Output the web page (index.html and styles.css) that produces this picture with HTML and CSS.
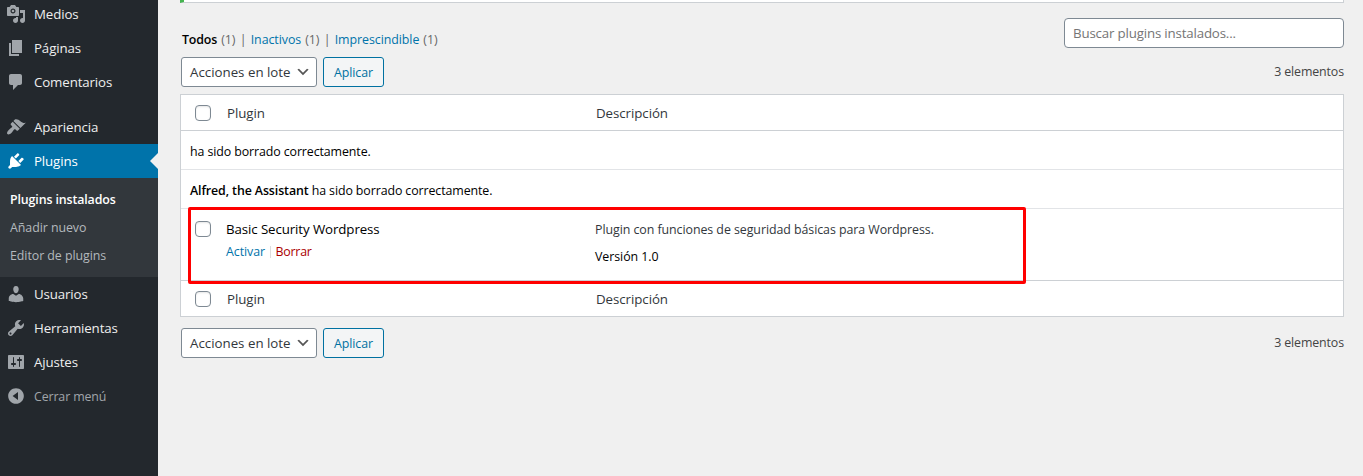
FILE: index.html
```
<!DOCTYPE html>
<html lang="es">
<head>
<meta charset="utf-8">
<title>Plugins</title>
<link rel="stylesheet" href="styles.css">
</head>
<body>
<div class="admin">
  <nav class="sidebar">
    <a class="item"><svg class="icon" viewBox="0 0 20 20"><path d="M13 11V4c0-.55-.45-1-1-1h-1.67L9 1H5L3.67 3H2c-.55 0-1 .45-1 1v7c0 .55.45 1 1 1h10c.55 0 1-.45 1-1zM7 4.5c1.38 0 2.5 1.12 2.5 2.5S8.38 9.5 7 9.5 4.5 8.38 4.5 7 5.62 4.5 7 4.5zM14 6h5v10.5c0 1.38-1.12 2.5-2.5 2.5S14 17.88 14 16.5s1.12-2.5 2.5-2.5c.17 0 .34.02.5.05V9h-3V6zm-4 8.05V13h2v3.5c0 1.38-1.12 2.5-2.5 2.5S7 17.88 7 16.5 8.12 14 9.5 14c.17 0 .34.02.5.05z"/><circle cx="7" cy="7" r="1.3"/></svg><span>Medios</span></a>
    <a class="item"><svg class="icon" viewBox="0 0 20 20"><path d="M6 15V2h10v13H6zm-1 1h8v2H3V5h2v11z"/></svg><span>Páginas</span></a>
    <a class="item"><svg class="icon" viewBox="0 0 20 20"><path d="M5 2h9c1.1 0 2 .9 2 2v7c0 1.1-.9 2-2 2h-2l-5 5v-5H5c-1.1 0-2-.9-2-2V4c0-1.1.9-2 2-2z"/></svg><span>Comentarios</span></a>
    <div class="separator"></div>
    <a class="item"><svg class="icon" viewBox="0 0 20 20"><path d="M14.48 11.06L7.41 3.99l1.5-1.5c.5-.56 2.3-.47 3.51.32 1.21.8 1.43 1.28 2.91 2.1 1.18.64 2.45 1.26 4.45.85zm-.71.71L6.7 4.7 4.93 6.47c-.39.39-.39 1.02 0 1.41l1.06 1.06c.39.39.39 1.03 0 1.42-.6.6-1.43 1.11-2.21 1.69-.35.26-.7.53-1.01.84C1.43 14.23.4 16.08 1.4 17.07c.99 1 2.84-.03 4.18-1.36.31-.31.58-.66.85-1.02.57-.78 1.08-1.61 1.69-2.21.39-.39 1.02-.39 1.41 0l1.06 1.06c.39.39 1.02.39 1.41 0z"/></svg><span>Apariencia</span></a>
    <a class="item current"><svg class="icon" viewBox="0 0 20 20"><path d="M13.11 4.36L9.87 7.6 8 5.73l3.24-3.24c.35-.34 1.05-.2 1.56.32.52.51.66 1.21.31 1.55zm-8 1.77l.91-1.12 9.01 9.01-1.19.84c-.71.71-2.63 1.16-3.82 1.16H6.14L4.9 17.26c-.59.59-1.54.59-2.12 0-.59-.58-.59-1.53 0-2.12l1.24-1.24v-3.88c0-1.13.4-3.19 1.09-3.89zm7.26 3.97l3.24-3.24c.34-.35 1.04-.21 1.55.31.52.51.66 1.21.31 1.55l-3.24 3.25z"/></svg><span>Plugins</span></a>
    <div class="submenu">
      <a class="sub active">Plugins instalados</a>
      <a class="sub">Añadir nuevo</a>
      <a class="sub">Editor de plugins</a>
    </div>
    <a class="item"><svg class="icon" viewBox="0 0 20 20"><path d="M10 9.25c-2.27 0-2.73-3.44-2.73-3.44C7 4.02 7.82 2 9.97 2c2.16 0 2.98 2.02 2.71 3.81 0 0-.41 3.44-2.68 3.44zm0 2.57L12.72 10c2.39 0 4.52 2.33 4.52 4.53v2.49s-3.65 1.13-7.24 1.13c-3.65 0-7.24-1.13-7.24-1.13v-2.49c0-2.25 1.94-4.48 4.47-4.48z"/></svg><span>Usuarios</span></a>
    <a class="item"><svg class="icon" viewBox="0 0 20 20"><path d="M16.68 9.77c-1.34 1.34-3.3 1.67-4.95.99l-5.41 6.52c-.99.99-2.59.99-3.58 0s-.99-2.59 0-3.57l6.52-5.42c-.68-1.65-.35-3.61.99-4.95 1.28-1.28 3.12-1.62 4.72-1.06l-2.89 2.89 2.82 2.82 2.86-2.87c.53 1.58.18 3.39-1.08 4.65zM3.81 16.21c.4.39 1.04.39 1.43 0 .4-.4.4-1.04 0-1.43-.39-.4-1.03-.4-1.43 0-.39.39-.39 1.03 0 1.43z"/></svg><span>Herramientas</span></a>
    <a class="item"><svg class="icon" viewBox="0 0 20 20"><path d="M18 16V4c0-.55-.45-1-1-1H3c-.55 0-1 .45-1 1v12c0 .55.45 1 1 1h14c.55 0 1-.45 1-1zM8 11h1c.55 0 1 .45 1 1s-.45 1-1 1H8v1.5c0 .28-.22.5-.5.5s-.5-.22-.5-.5V13H6c-.55 0-1-.45-1-1s.45-1 1-1h1V5.5c0-.28.22-.5.5-.5s.5.22.5.5V11zm5-2h-1c-.55 0-1-.45-1-1s.45-1 1-1h1V5.5c0-.28.22-.5.5-.5s.5.22.5.5V7h1c.55 0 1 .45 1 1s-.45 1-1 1h-1v5.5c0 .28-.22.5-.5.5s-.5-.22-.5-.5V9z"/></svg><span>Ajustes</span></a>
    <a class="item collapse"><svg class="icon" viewBox="0 0 20 20"><path fill-rule="evenodd" d="M10 2.16c4.33 0 7.84 3.51 7.84 7.84s-3.51 7.84-7.84 7.84S2.16 14.33 2.16 10 5.67 2.16 10 2.16zM12 13.88V6.12L6.6 10z"/></svg><span>Cerrar menú</span></a>
  </nav>

  <main class="content">
    <div class="notice"></div>
    <div class="top">
      <div class="views">
        <b class="todos">Todos</b><span class="count">(1)</span><i class="bar">|</i><a class="inactivos">Inactivos</a><span class="count">(1)</span><i class="bar">|</i><a class="impres">Imprescindible</a><span class="count">(1)</span>
      </div>
      <div class="search">Buscar plugins instalados...</div>
    </div>
    <div class="tablenav first">
      <div class="select"><span>Acciones en lote</span><svg class="chev" viewBox="0 0 20 20"><path d="M5 6l5 5 5-5 2 1-7 7-7-7 2-1z"/></svg></div>
      <div class="button">Aplicar</div>
      <div class="total">3 elementos</div>
    </div>
    <div class="table">
      <div class="row head"><span class="box"></span><span class="col-name">Plugin</span><span class="col-desc">Descripción</span></div>
      <div class="row message">ha sido borrado correctamente.</div>
      <div class="row message"><span><b>Alfred, the Assistant</b> ha sido borrado correctamente.</span></div>
      <div class="row plugin">
        <span class="box"></span>
        <div class="col-name">
          <div class="name">Basic Security Wordpress</div>
          <div class="actions"><a class="activate">Activar</a><i class="divider"></i><a class="delete">Borrar</a></div>
        </div>
        <div class="col-desc">
          <div class="description">Plugin con funciones de seguridad básicas para Wordpress.</div>
          <div class="version">Versión 1.0</div>
        </div>
        <div class="highlight"></div>
      </div>
      <div class="row head foot"><span class="box"></span><span class="col-name">Plugin</span><span class="col-desc">Descripción</span></div>
    </div>
    <div class="tablenav last">
      <div class="select"><span>Acciones en lote</span><svg class="chev" viewBox="0 0 20 20"><path d="M5 6l5 5 5-5 2 1-7 7-7-7 2-1z"/></svg></div>
      <div class="button">Aplicar</div>
      <div class="total">3 elementos</div>
    </div>
  </main>
</div>
</body>
</html>
```
FILE: styles.css
```
* { box-sizing: border-box; }
body {
  margin: 0;
  background: #f0f0f0;
  color: #32373c;
  font-family: "Open Sans", "Noto Sans", sans-serif;
  font-size: 12.4px;
  letter-spacing: -0.06px;
  line-height: 20px;
  white-space: nowrap;
  overflow: hidden;
}
.admin { display: flex; height: 476px; overflow: hidden; }

.sidebar { width: 158px; height: 479px; margin-top: -3px; background: #23282d; flex: none; }
.item { display: flex; align-items: center; gap: 8px; height: 34px; padding-left: 6px; color: #eee; font-size: 13.3px; letter-spacing: -0.13px; }
.icon { width: 20px; height: 20px; fill: #a0a5aa; flex: none; }
.separator { height: 11px; }
.current { background: #0073aa; color: #fff; position: relative; }
.current .icon { fill: #fff; }
.current::after { content: ""; position: absolute; right: 0; top: 9px; border: 8px solid transparent; border-left-width: 0; border-right-color: #f0f0f0; }
.submenu { height: 99px; padding: 8px 0 7px 10px; background: #32373c; }
.sub { display: block; height: 28px; line-height: 28px; color: #b4b9be; }
.active { color: #fff; font-weight: 600; letter-spacing: -0.12px; }
.collapse { color: #a0a5aa; font-size: 12.4px; }
.collapse span { padding-top: 2px; }

.content { flex: 1; padding: 0 19px 0 22px; }
.notice { height: 3px; background: #fff; border: 1px solid #ccd0d4; border-top: 0; border-left: 4px solid #46b450; }
.top { display: flex; justify-content: space-between; padding-top: 15px; height: 54px; }
.views { display: flex; padding: 12px 0 0 2px; color: #666; }
.views a { color: #0073aa; }
.todos { color: #000; font-weight: 600; letter-spacing: -0.15px; }
.count { margin-left: 4px; }
.bar { font-style: normal; margin: 0 4.3px; }
.search { width: 280px; height: 30px; padding: 4px 8px; background: #fff; border: 1px solid #7e8993; border-radius: 4px; color: #757575; font-size: 13.3px; letter-spacing: -0.17px; }

.tablenav { display: flex; padding-left: 1px; height: 30px; }
.select { display: flex; align-items: center; justify-content: space-between; width: 136px; height: 30px; padding: 0 5px 0 8px; background: #fff; border: 1px solid #7e8993; border-radius: 3px; font-size: 13.3px; letter-spacing: 0; }
.chev { width: 16px; height: 16px; fill: #555; }
.button { width: 61px; height: 30px; margin-left: 6px; padding-top: 1px; line-height: 28px; text-align: center; background: #f3f5f6; border: 1px solid #0071a1; border-radius: 3px; color: #0071a1; }
.total { margin-left: auto; padding-top: 5px; color: #444; letter-spacing: -0.12px; }

.table { margin: 7px 0 11px; background: #fff; border: 1px solid #ccd0d4; }
.row { display: flex; border-bottom: 1px solid #e2e4e7; height: 39px; }
.head { height: 36px; border-color: #ccd0d4; align-items: center; font-size: 13.3px; }
.foot { border-bottom: 0; height: 35px; }
.box { width: 16px; height: 16px; margin-left: 14px; border: 1px solid #7e8993; border-radius: 4px; background: #fff; box-shadow: inset 0 1px 2px rgba(0,0,0,.1); flex: none; }
.col-name { width: 369px; margin-left: 16px; }
.message { align-items: center; padding: 4px 0 0 9px; color: #000; letter-spacing: -0.1px; }
.message b { font-weight: 600; }
.plugin { height: 72px; border-color: #ccd0d4; position: relative; }
.plugin .box { margin-top: 12px; }
.plugin .col-name { margin-left: 15px; padding-top: 10px; }
.plugin .col-desc { padding-top: 11px; }
.name { color: #000; font-size: 13.3px; letter-spacing: -0.1px; }
.actions { display: flex; align-items: center; padding-top: 3px; }
.activate { color: #0073aa; }
.delete { color: #a00; letter-spacing: -0.25px; }
.divider { width: 1px; height: 12px; margin: 0 4.5px 0 5px; background: #ddd; }
.version { margin-top: 7px; color: #000; }
.highlight { position: absolute; left: 7px; top: -2px; width: 838px; height: 77px; border: 3px solid #f00; border-radius: 2px; z-index: 1; }
```
